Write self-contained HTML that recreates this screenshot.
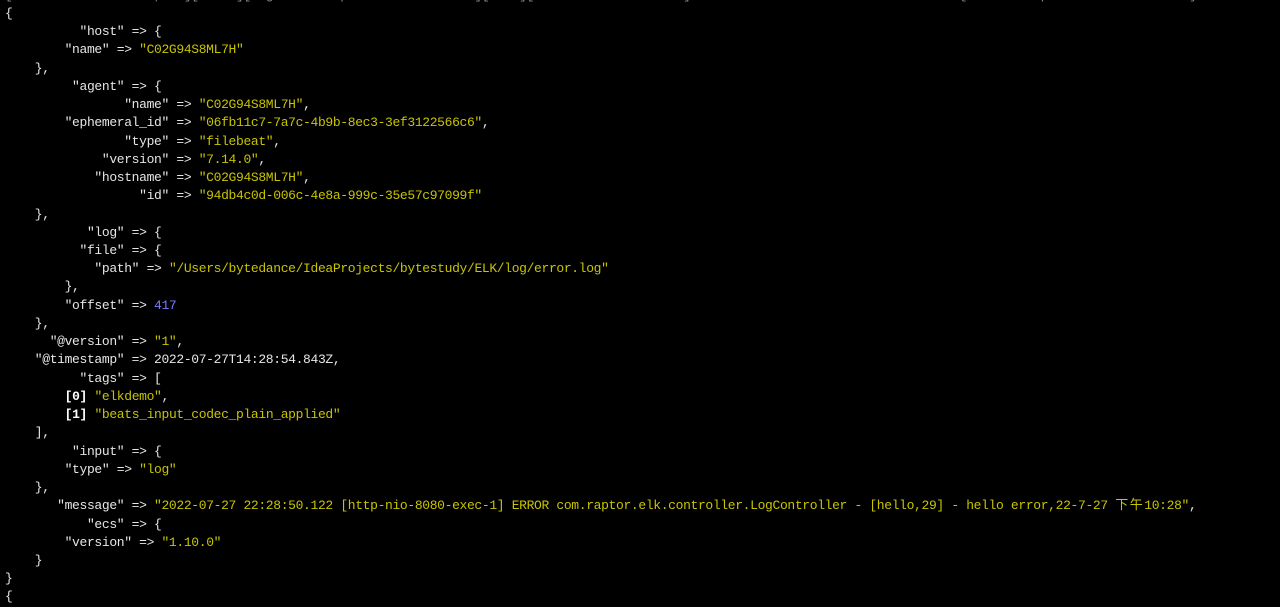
<!DOCTYPE html>
<html><head><meta charset="utf-8"><style>
html,body{margin:0;padding:0;background:#000;width:1280px;height:597px;overflow:hidden}
pre{margin:0;position:absolute;left:5px;top:-13.3px;font-family:"Liberation Mono","Noto Sans CJK SC",monospace;font-size:13px;letter-spacing:-0.35px;line-height:18.23px;color:#e6e6e6;white-space:pre}
.y{color:#c8c400}.b{color:#7b7bff}.w{color:#fff;font-weight:bold}.g{color:#888}.c{letter-spacing:1.5px}
</style></head><body><pre><span class="g">[2022-07-27T14:28:54,859][INFO ][logstash.outputs.elasticsearch][main][b4e0dbcdf0e1a9d6b2a1] Restored connection to ES instance {:url=&gt;"http://localhost:9200/"}</span>
{
          "host" =&gt; {
        "name" =&gt; <span class="y">"C02G94S8ML7H"</span>
    },
         "agent" =&gt; {
                "name" =&gt; <span class="y">"C02G94S8ML7H"</span>,
        "ephemeral_id" =&gt; <span class="y">"06fb11c7-7a7c-4b9b-8ec3-3ef3122566c6"</span>,
                "type" =&gt; <span class="y">"filebeat"</span>,
             "version" =&gt; <span class="y">"7.14.0"</span>,
            "hostname" =&gt; <span class="y">"C02G94S8ML7H"</span>,
                  "id" =&gt; <span class="y">"94db4c0d-006c-4e8a-999c-35e57c97099f"</span>
    },
           "log" =&gt; {
          "file" =&gt; {
            "path" =&gt; <span class="y">"/Users/bytedance/IdeaProjects/bytestudy/ELK/log/error.log"</span>
        },
        "offset" =&gt; <span class="b">417</span>
    },
      "@version" =&gt; <span class="y">"1"</span>,
    "@timestamp" =&gt; 2022-07-27T14:28:54.843Z,
          "tags" =&gt; [
        <span class="w">[0]</span> <span class="y">"elkdemo"</span>,
        <span class="w">[1]</span> <span class="y">"beats_input_codec_plain_applied"</span>
    ],
         "input" =&gt; {
        "type" =&gt; <span class="y">"log"</span>
    },
       "message" =&gt; <span class="y">"2022-07-27 22:28:50.122 [http-nio-8080-exec-1] ERROR com.raptor.elk.controller.LogController - [hello,29] - hello error,22-7-27 <span class="c">下午</span>10:28"</span>,
           "ecs" =&gt; {
        "version" =&gt; <span class="y">"1.10.0"</span>
    }
}
{</pre></body></html>
